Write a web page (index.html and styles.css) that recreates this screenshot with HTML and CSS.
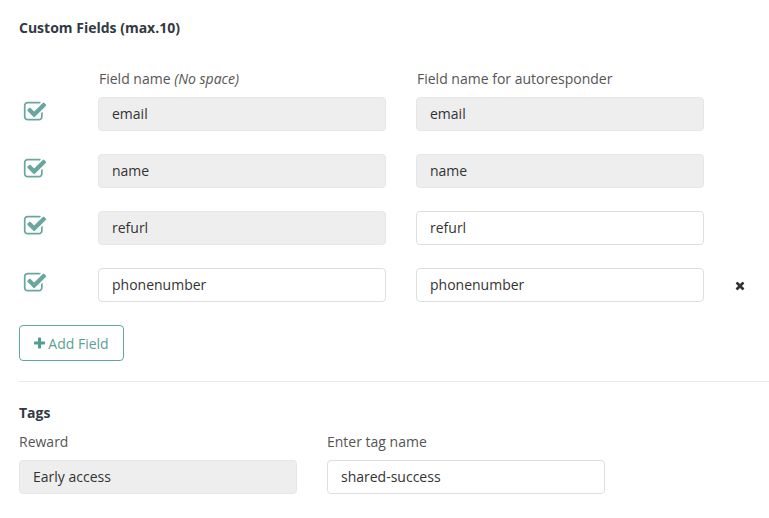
FILE: index.html
```html
<!DOCTYPE html>
<html>
<head>
<meta charset="utf-8">
<link rel="stylesheet" href="styles.css">
</head>
<body>
<div class="page">
  <h3 class="title">Custom Fields (max.10)</h3>
  <div class="labels">
    <div class="lbl">Field name <em>(No space)</em></div>
    <div class="lbl">Field name for autoresponder</div>
  </div>
  <div class="rows">
    <div class="row">
      <div class="chk"><svg width="24" height="24" viewBox="0 0 1792 1792"><path fill="#6aa6a0" d="M1472 930v318q0 119-84.5 203.5t-203.5 84.5h-832q-119 0-203.5-84.5t-84.5-203.5v-832q0-119 84.5-203.5t203.5-84.5h832q63 0 117 25 15 7 18 23 3 17-9 29l-49 49q-10 10-23 10-3 0-9-2-23-6-45-6h-832q-66 0-113 47t-47 113v832q0 66 47 113t113 47h832q66 0 113-47t47-113v-254q0-13 9-22l64-64q10-10 23-10 6 0 12 3 20 8 20 29zm231-489l-814 814q-24 24-57 24t-57-24l-430-430q-24-24-24-57t24-57l110-110q24-24 57-24t57 24l263 263 647-647q24-24 57-24t57 24l110 110q24 24 24 57t-24 57z"/></svg></div>
      <div class="inp dis">email</div>
      <div class="inp dis">email</div>
      <div class="del"></div>
    </div>
    <div class="row">
      <div class="chk"><svg width="24" height="24" viewBox="0 0 1792 1792"><path fill="#6aa6a0" d="M1472 930v318q0 119-84.5 203.5t-203.5 84.5h-832q-119 0-203.5-84.5t-84.5-203.5v-832q0-119 84.5-203.5t203.5-84.5h832q63 0 117 25 15 7 18 23 3 17-9 29l-49 49q-10 10-23 10-3 0-9-2-23-6-45-6h-832q-66 0-113 47t-47 113v832q0 66 47 113t113 47h832q66 0 113-47t47-113v-254q0-13 9-22l64-64q10-10 23-10 6 0 12 3 20 8 20 29zm231-489l-814 814q-24 24-57 24t-57-24l-430-430q-24-24-24-57t24-57l110-110q24-24 57-24t57 24l263 263 647-647q24-24 57-24t57 24l110 110q24 24 24 57t-24 57z"/></svg></div>
      <div class="inp dis">name</div>
      <div class="inp dis">name</div>
      <div class="del"></div>
    </div>
    <div class="row">
      <div class="chk"><svg width="24" height="24" viewBox="0 0 1792 1792"><path fill="#6aa6a0" d="M1472 930v318q0 119-84.5 203.5t-203.5 84.5h-832q-119 0-203.5-84.5t-84.5-203.5v-832q0-119 84.5-203.5t203.5-84.5h832q63 0 117 25 15 7 18 23 3 17-9 29l-49 49q-10 10-23 10-3 0-9-2-23-6-45-6h-832q-66 0-113 47t-47 113v832q0 66 47 113t113 47h832q66 0 113-47t47-113v-254q0-13 9-22l64-64q10-10 23-10 6 0 12 3 20 8 20 29zm231-489l-814 814q-24 24-57 24t-57-24l-430-430q-24-24-24-57t24-57l110-110q24-24 57-24t57 24l263 263 647-647q24-24 57-24t57 24l110 110q24 24 24 57t-24 57z"/></svg></div>
      <div class="inp dis">refurl</div>
      <div class="inp">refurl</div>
      <div class="del"></div>
    </div>
    <div class="row">
      <div class="chk"><svg width="24" height="24" viewBox="0 0 1792 1792"><path fill="#6aa6a0" d="M1472 930v318q0 119-84.5 203.5t-203.5 84.5h-832q-119 0-203.5-84.5t-84.5-203.5v-832q0-119 84.5-203.5t203.5-84.5h832q63 0 117 25 15 7 18 23 3 17-9 29l-49 49q-10 10-23 10-3 0-9-2-23-6-45-6h-832q-66 0-113 47t-47 113v832q0 66 47 113t113 47h832q66 0 113-47t47-113v-254q0-13 9-22l64-64q10-10 23-10 6 0 12 3 20 8 20 29zm231-489l-814 814q-24 24-57 24t-57-24l-430-430q-24-24-24-57t24-57l110-110q24-24 57-24t57 24l263 263 647-647q24-24 57-24t57 24l110 110q24 24 24 57t-24 57z"/></svg></div>
      <div class="inp">phonenumber</div>
      <div class="inp">phonenumber</div>
      <div class="del"><svg width="10" height="13" viewBox="0 0 1408 1792"><path fill="#333" d="M1298 1322q0 40-28 68l-136 136q-28 28-68 28t-68-28l-294-294-294 294q-28 28-68 28t-68-28l-136-136q-28-28-28-68t28-68l294-294-294-294q-28-28-28-68t28-68l136-136q28-28 68-28t68 28l294 294 294-294q28-28 68-28t68 28l136 136q28 28 28 68t-28 68l-294 294 294 294q28 28 28 68z"/></svg></div>
    </div>
  </div>
  <button class="add"><svg width="11" height="14" viewBox="0 0 1408 1792"><path fill="#4f9e93" d="M1408 800v192q0 40-28 68t-68 28h-416v416q0 40-28 68t-68 28h-192q-40 0-68-28t-28-68v-416h-416q-40 0-68-28t-28-68v-192q0-40 28-68t68-28h416v-416q0-40 28-68t68-28h192q40 0 68 28t28 68v416h416q40 0 68 28t28 68z"/></svg>Add Field</button>
  <hr class="sep">
  <h3 class="title tags">Tags</h3>
  <div class="tagrow">
    <div class="tagcol">
      <div class="lbl">Reward</div>
      <div class="inp dis wide">Early access</div>
    </div>
    <div class="tagcol">
      <div class="lbl">Enter tag name</div>
      <div class="inp wide">shared-success</div>
    </div>
  </div>
</div>
</body>
</html>
```

FILE: styles.css
```css
html, body {
  margin: 0;
  padding: 0;
  background: #fff;
}
body {
  font-family: "Open Sans", "DejaVu Sans", sans-serif;
  color: #333;
}
.page {
  padding: 18px 0 0 19px;
}
.title {
  margin: 0;
  font-size: 14px;
  font-weight: 700;
  color: #333a44;
  line-height: 20px;
}
.labels {
  display: flex;
  gap: 30px;
  margin: 31px 0 0 80px;
}
.labels .lbl {
  width: 288px;
}
.lbl {
  font-size: 14px;
  color: #555;
  line-height: 20px;
}
.lbl em {
  font-style: italic;
}
.rows {
  display: flex;
  flex-direction: column;
  gap: 23px;
  margin-top: 8px;
}
.row {
  display: flex;
  align-items: center;
  gap: 30px;
}
.chk {
  box-sizing: border-box;
  width: 49px;
  display: flex;
  align-items: center;
  padding-left: 4px;
  margin-top: -4px;
}
.chk svg {
  display: block;
}
.inp {
  box-sizing: border-box;
  width: 288px;
  height: 34px;
  border: 1px solid #dedede;
  border-radius: 4px;
  background: #fff;
  font-size: 14px;
  line-height: 32px;
  padding-left: 13px;
  color: #333;
}
.inp.dis {
  background: #eeeeee;
  border-color: #e6e6e6;
}
.del {
  width: 20px;
  display: flex;
  justify-content: center;
  margin-left: -4px;
}
.del svg {
  display: block;
}
.add {
  margin-top: 23px;
  height: 36px;
  width: 105px;
  border: 1px solid #5fa79d;
  border-radius: 4px;
  background: #fff;
  color: #5b9e95;
  font-family: "Open Sans", "DejaVu Sans", sans-serif;
  font-size: 14px;
  display: flex;
  align-items: center;
  justify-content: center;
  gap: 3px;
  padding: 0;
}
.add svg {
  display: block;
}
.sep {
  margin: 20px 0 0 0;
  border: 0;
  border-top: 1px solid #e8e8e8;
}
.tags {
  margin-top: 21px;
}
.tagrow {
  display: flex;
  gap: 30px;
  margin-top: 9px;
}
.tagcol .lbl {
  margin-bottom: 8px;
}
.inp.wide {
  width: 278px;
}
```
